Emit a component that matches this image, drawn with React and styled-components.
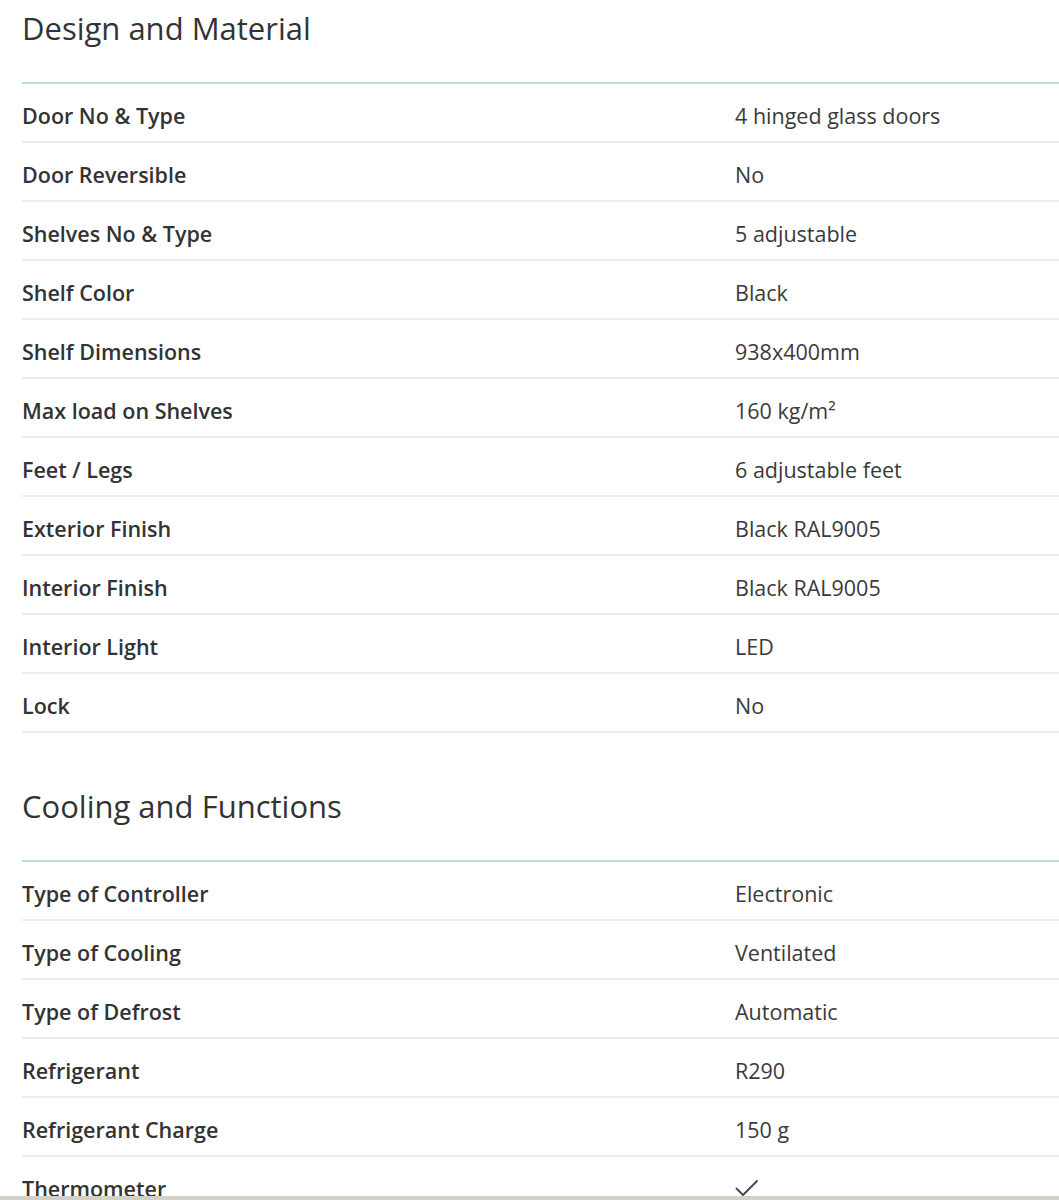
import React from 'react';
import styled, { createGlobalStyle } from 'styled-components';

const GlobalStyle = createGlobalStyle`
  html, body {
    margin: 0;
    padding: 0;
    background: #fff;
  }
  body {
    font-family: "Open Sans", "Liberation Sans", sans-serif;
    color: #333;
  }
`;

const Page = styled.div`
  height: 1200px;
  display: flex;
  flex-direction: column;
  overflow: hidden;
`;

const Content = styled.div`
  flex: 1;
  overflow: hidden;
  padding-left: 22px;
`;

const BottomBar = styled.div`
  height: 4px;
  flex-shrink: 0;
  background: #d3d1c7;
`;

const Section = styled.section`
  margin-top: ${props => props.first ? '0' : '45px'};
`;

const Heading = styled.h2`
  margin: 0;
  height: 84px;
  padding-top: 6px;
  box-sizing: border-box;
  font-size: 31px;
  font-weight: 400;
  line-height: 44px;
  color: #333;
  border-bottom: 2px solid #b9dedb;
`;

const Row = styled.div`
  display: grid;
  grid-template-columns: 713px 1fr;
  align-items: center;
  height: 59px;
  box-sizing: border-box;
  border-bottom: 2px solid #eceeed;
  font-size: 21.5px;
  padding-top: 5px;
`;

const Label = styled.div`
  font-weight: 600;
  color: #333;
`;

const Value = styled.div`
  font-weight: 400;
  color: #3a3a3a;
  display: flex;
  align-items: center;
`;

const Check = () => (
  <svg width="24" height="20" viewBox="0 0 24 20" fill="none">
    <path d="M1.5 10.5 L8 17 L22 3" stroke="#444" strokeWidth="1.8" strokeLinecap="round" strokeLinejoin="round" />
  </svg>
);

const design = [
  ['Door No & Type', '4 hinged glass doors'],
  ['Door Reversible', 'No'],
  ['Shelves No & Type', '5 adjustable'],
  ['Shelf Color', 'Black'],
  ['Shelf Dimensions', '938x400mm'],
  ['Max load on Shelves', '160 kg/m²'],
  ['Feet / Legs', '6 adjustable feet'],
  ['Exterior Finish', 'Black RAL9005'],
  ['Interior Finish', 'Black RAL9005'],
  ['Interior Light', 'LED'],
  ['Lock', 'No'],
];

const cooling = [
  ['Type of Controller', 'Electronic'],
  ['Type of Cooling', 'Ventilated'],
  ['Type of Defrost', 'Automatic'],
  ['Refrigerant', 'R290'],
  ['Refrigerant Charge', '150 g'],
  ['Thermometer', 'check'],
];

function SpecTable({ title, rows, first }) {
  return (
    <Section first={first}>
      <Heading>{title}</Heading>
      {rows.map(([label, value]) => (
        <Row key={label}>
          <Label>{label}</Label>
          <Value>{value === 'check' ? <Check /> : value}</Value>
        </Row>
      ))}
    </Section>
  );
}

export default function App() {
  return (
    <Page>
      <GlobalStyle />
      <Content>
        <SpecTable title="Design and Material" rows={design} first />
        <SpecTable title="Cooling and Functions" rows={cooling} />
      </Content>
      <BottomBar />
    </Page>
  );
}
